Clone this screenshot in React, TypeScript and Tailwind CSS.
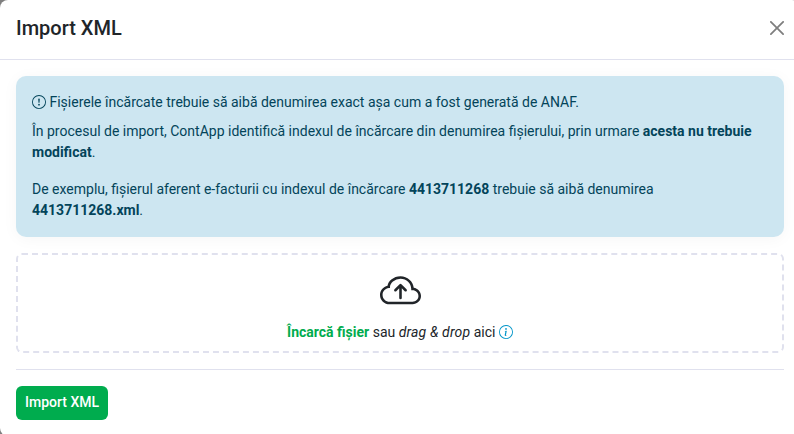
import { BsCloudArrowUp, BsExclamationCircle, BsInfoCircle } from "react-icons/bs"

function CloseIcon() {
  return (
    <svg className="w-[14px] h-[14px]" viewBox="0 0 16 16" fill="#000">
      <path d="M.293.293a1 1 0 0 1 1.414 0L8 6.586 14.293.293a1 1 0 1 1 1.414 1.414L9.414 8l6.293 6.293a1 1 0 0 1-1.414 1.414L8 9.414l-6.293 6.293a1 1 0 0 1-1.414-1.414L6.586 8 .293 1.707a1 1 0 0 1 0-1.414z" />
    </svg>
  )
}

export default function App() {
  return (
    <div className="h-[434px] w-full overflow-hidden bg-[#7f7f7f]">
      {/* Modal */}
      <div className="h-[436px] w-[800px] rounded-lg bg-white font-[Roboto,sans-serif] text-sm leading-[21px] text-[#212529]">
        <div className="flex h-[60px] items-center justify-between border-b border-[#e0e1ee] px-4 pb-[3px]">
          <h5 className="text-xl font-medium leading-[30px]">Import XML</h5>
          <button className="opacity-50" aria-label="Close">
            <CloseIcon />
          </button>
        </div>

        <div className="p-4">
          <div className="rounded-[10px] bg-[#cde6f1] p-4 text-[#03445a] shadow-[0_2px_16px_rgba(0,0,0,0.04)]">
            <p className="mb-2">
              <BsExclamationCircle className="inline-block h-[14px] w-[14px] align-[-2px]" /> Fișierele încărcate trebuie să aibă denumirea exact așa cum a fost generată de ANAF.
            </p>
            <p className="mb-4">
              În procesul de import, ContApp identifică indexul de încărcare din denumirea fișierului, prin urmare <b>acesta nu trebuie modificat</b>.
            </p>
            <p>
              De exemplu, fișierul aferent e-facturii cu indexul de încărcare <b>4413711268</b> trebuie să aibă denumirea <br />
              <b>4413711268.xml</b>.
            </p>
          </div>

          {/* Drop zone */}
          <div className="mt-4 flex h-[100px] flex-col items-center rounded-md border-2 border-dashed border-[#e0e1ee] pt-4">
            <BsCloudArrowUp className="h-[41px] w-[41px]" />
            <p className="mt-2.5">
              <b className="text-[#00ac4e]">Încarcă fișier</b> sau <i className="tracking-[0.15px]">drag & drop</i> aici{" "}
              <BsInfoCircle className="inline-block h-[14px] w-[14px] align-[-2px] text-[#0095c8]" />
            </p>
          </div>

          <hr className="my-4 border-[#e0e1ee]" />

          <button className="h-[34px] rounded-md bg-[#00ac4e] px-[9px] pb-px text-sm font-medium leading-[21px] text-white">
            Import XML
          </button>
        </div>
      </div>
    </div>
  )
}
